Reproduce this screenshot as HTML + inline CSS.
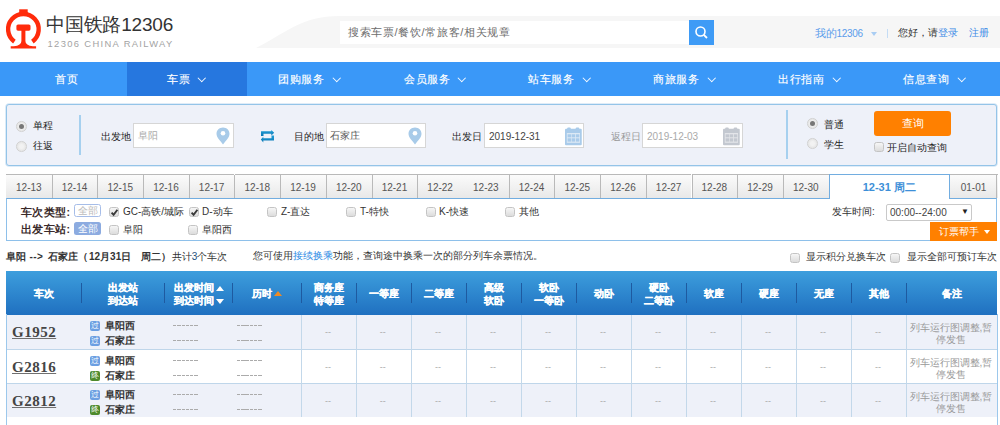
<!DOCTYPE html>
<html><head><meta charset="utf-8">
<style>
*{margin:0;padding:0;box-sizing:border-box}
html,body{width:1000px;height:425px;overflow:hidden;background:#fff}
body{font-family:"Liberation Sans",sans-serif;font-size:10px;color:#333;position:relative}
.a{position:absolute;white-space:nowrap;line-height:1}
/* header */
#logo-t{left:46px;top:15px;font-size:19px;color:#333;letter-spacing:-0.2px}
#logo-s{left:47.5px;top:38.5px;font-size:9.4px;color:#a3a3a3;letter-spacing:1.35px}
#band{left:0;top:16px;width:1000px;height:32px}
#sinput{left:340px;top:21px;width:349px;height:23px;background:#fff}
#sbtn{left:689px;top:20px;width:25px;height:25px;background:#3e9bf6}
.nav{top:62px;height:34px;background:#3a98f8;left:0;width:1000px}
.navi{top:74px;font-size:11px;color:#fff;letter-spacing:0.65px;-webkit-text-stroke:0.15px #fff}
.chev{position:absolute;top:75px;width:5.5px;height:5.5px;border-right:1.6px solid #fff;border-bottom:1.6px solid #fff;transform:rotate(45deg)}
/* panel */
#panel{left:6px;top:104px;width:991px;height:62px;background:#eef1f9;border:1px solid #94c4e8;border-radius:3px;box-shadow:0 0 0 0.8px rgba(160,200,235,0.45)}
.radio{position:absolute;width:10.5px;height:10.5px;border-radius:50%;border:1px solid #d2d2d2;background:radial-gradient(circle,#f2f2f2 30%,#dcdcdc 100%)}
.radio.on:after{content:"";position:absolute;left:1.75px;top:1.75px;width:5px;height:5px;border-radius:50%;background:#777}
.lbl{font-size:10.3px;color:#262626;margin-top:1px}
.inp{position:absolute;height:25px;background:#fff;border:1px solid #d6d6d6;top:123px}
.cb{position:absolute;width:10px;height:10px;border:1px solid #c4c4c4;border-radius:2.5px;background:linear-gradient(#f6f6f6,#dcdcdc)}
.cb.k svg{position:absolute;left:0;top:0}
.vdiv{position:absolute;width:1.5px;background:#a6d0ef}
/* tabs */
.tab{position:absolute;top:174px;height:24px;width:46px;border-top:1px solid #b9b9b9;background:linear-gradient(#fbfbfb,#e8e8e8);font-size:10px;color:#555;text-align:center;line-height:25px}
#filter{left:6px;top:198px;width:991px;height:43px;border:1px solid #72ade0;border-left-color:#8ec0ea;border-right-color:#8ec0ea;border-bottom-color:#8ec0ea;background:#fff}
/* table */
#thead{left:6px;top:271px;width:991px;height:44px;background:linear-gradient(#3d9edd,#1f70c0)}
.th{position:absolute;color:#fff;font-weight:bold;-webkit-text-stroke:0.25px #fff;font-size:10px;text-align:center;line-height:13px;white-space:nowrap}
.hsep{position:absolute;top:283px;width:1px;height:20px;background:#1e5aa0}
.row{position:absolute;left:6px;width:991px;height:34px}
.tr{font-family:"Liberation Serif",serif;font-weight:bold;font-size:15px;color:#454545;text-decoration:underline;text-decoration-color:#707070;text-decoration-thickness:1.3px;text-underline-offset:0.5px;letter-spacing:0.5px}
.st{font-size:10px;font-weight:bold;color:#333}
.ic{position:absolute;width:10px;height:10px;border-radius:2px;background:#6c9fe2;color:#fff;font-size:8px;line-height:10px;text-align:center}
.ic.g{background:#4d8a2c}
.dash{position:absolute;width:25.5px;height:1px;background:repeating-linear-gradient(90deg,#ababab 0,#ababab 3.4px,rgba(0,0,0,0) 3.4px,rgba(0,0,0,0) 4.25px)}
.cell{position:absolute;width:1px;background:#c3d8ea}
.dd{position:absolute;font-size:9px;color:#aaa}
.rm{position:absolute;font-size:10px;color:#999;text-align:center;line-height:12px;width:90px;white-space:normal}
.up,.dn,.upo{display:inline-block;width:0;height:0;border-left:4px solid transparent;border-right:4px solid transparent;margin-left:2px;vertical-align:middle}
.up{border-bottom:5px solid #fff}.dn{border-top:5px solid #fff}.upo{border-bottom:5px solid #f08a24}
.inf{top:252px;font-size:10px;color:#333}.inf.b{font-weight:bold}
</style></head><body>

<!-- logo -->
<svg class="a" style="left:0;top:0" width="50" height="53" viewBox="0 0 50 53">
  <path d="M14.4 41.6 A15.3 15.3 0 1 1 32.4 41.6" fill="none" stroke="#ff2b0b" stroke-width="4.4"/>
  <rect x="19.2" y="9.3" width="8.5" height="4" fill="#ff2b0b"/>
  <rect x="16.4" y="24.4" width="14.1" height="6.3" rx="1.6" fill="#ff2b0b"/>
  <path d="M21.4 30 H25.4 V41 Q25.4 45.6 33 46.2 H36.1 V48.6 H10.7 V46.2 H13.8 Q21.4 45.6 21.4 41 Z" fill="#ff2b0b"/>
</svg>
<div class="a" id="logo-t">中国铁路12306</div>
<div class="a" id="logo-s">12306 CHINA RAILWAY</div>

<svg class="a" style="left:0;top:16px" width="1000" height="32"><path d="M256 32 C 285 18, 300 0, 340 0 L1000 0 L1000 32 Z" fill="#f6f6f6"/></svg>
<div class="a" id="sinput"></div>
<div class="a" style="left:348px;top:27px;font-size:11px;color:#6d6d6d;letter-spacing:0.65px">搜索车票/餐饮/常旅客/相关规章</div>
<div class="a" id="sbtn"><svg width="25" height="25"><circle cx="11.5" cy="11.5" r="4.5" fill="none" stroke="#fff" stroke-width="1.6"/><path d="M14.8 14.8 L18 18" stroke="#fff" stroke-width="1.8"/></svg></div>
<div class="a" style="left:815px;top:27.5px;font-size:10.5px;color:#5a9ceb;letter-spacing:-0.3px">我的<span style="font-size:10px">12306</span></div>
<div class="a" style="left:871px;top:32px;width:0;height:0;border-left:3.5px solid transparent;border-right:3.5px solid transparent;border-top:4px solid #a9cdf3"></div>
<div class="a" style="left:887px;top:29px;width:1px;height:9px;background:#c4dcf5"></div>
<div class="a" style="left:898px;top:27.5px;font-size:10px;color:#333">您好，请<span style="color:#3b8ae6">登录</span></div>
<div class="a" style="left:968.5px;top:27.5px;font-size:10px;color:#3b8ae6">注册</div>

<!-- nav -->
<div class="a nav"></div>
<div class="a" style="left:127px;top:62px;width:120px;height:34px;background:#2677df"></div>
<div class="a navi" style="left:55px">首页</div>
<div class="a navi" style="left:167px">车票</div><div class="chev" style="left:199px"></div>
<div class="a navi" style="left:278px">团购服务</div><div class="chev" style="left:334px"></div>
<div class="a navi" style="left:404px">会员服务</div><div class="chev" style="left:459px"></div>
<div class="a navi" style="left:528px">站车服务</div><div class="chev" style="left:584px"></div>
<div class="a navi" style="left:653px">商旅服务</div><div class="chev" style="left:709px"></div>
<div class="a navi" style="left:778px">出行指南</div><div class="chev" style="left:834px"></div>
<div class="a navi" style="left:903px">信息查询</div><div class="chev" style="left:959px"></div>

<!-- panel -->
<div class="a" id="panel"></div>
<div class="radio on" style="left:16px;top:121px"></div>
<div class="a lbl" style="left:33px;top:120px">单程</div>
<div class="radio" style="left:16px;top:141px"></div>
<div class="a lbl" style="left:33px;top:140px">往返</div>
<div class="vdiv" style="left:79px;top:115px;height:40px"></div>

<div class="a lbl" style="left:101px;top:131px">出发地</div>
<div class="inp" style="left:133px;width:101px"></div>
<div class="a" style="left:138px;top:131px;font-size:10px;color:#aaa">阜阳</div>
<svg class="a" style="left:216px;top:127px" width="14" height="18" viewBox="0 0 14 18"><path d="M7 0.5 C3.2 0.5 0.5 3.3 0.5 6.8 C0.5 10.5 4 13.5 7 17.5 C10 13.5 13.5 10.5 13.5 6.8 C13.5 3.3 10.8 0.5 7 0.5Z" fill="#a8cbe9"/><circle cx="7" cy="6.3" r="2.3" fill="#fff"/></svg>

<svg class="a" style="left:255px;top:125px" width="25" height="22" viewBox="0 0 25 22"><defs><linearGradient id="sg" x1="0" y1="0" x2="0" y2="1"><stop offset="0" stop-color="#22a0d8"/><stop offset="1" stop-color="#0a76b4"/></linearGradient></defs><path d="M6 6.2 H16.3 V5 L19.2 7.8 L16.3 10.6 V8.8 H8.5 V11.1 H6 Z" fill="url(#sg)"/><path d="M19 15.5 H8.3 V17.4 L5.8 14.5 L8.3 11.7 V13.2 H16.5 V10.4 H19 Z" fill="url(#sg)"/></svg>

<div class="a lbl" style="left:294px;top:131px">目的地</div>
<div class="inp" style="left:326px;width:100px"></div>
<div class="a" style="left:330px;top:131px;font-size:10px;color:#555">石家庄</div>
<svg class="a" style="left:408px;top:127px" width="14" height="18" viewBox="0 0 14 18"><path d="M7 0.5 C3.2 0.5 0.5 3.3 0.5 6.8 C0.5 10.5 4 13.5 7 17.5 C10 13.5 13.5 10.5 13.5 6.8 C13.5 3.3 10.8 0.5 7 0.5Z" fill="#a8cbe9"/><circle cx="7" cy="6.3" r="2.3" fill="#fff"/></svg>

<div class="a lbl" style="left:452px;top:131px">出发日</div>
<div class="inp" style="left:484px;width:100px"></div>
<div class="a" style="left:489px;top:132px;font-size:10px;color:#444">2019-12-31</div>
<svg class="a" style="left:565px;top:127px" width="18" height="19" viewBox="0 0 18 19"><rect x="0" y="1.8" width="16.75" height="16.4" rx="1" fill="#a9cbea"/><rect x="2.3" y="0.4" width="3.4" height="3" rx="0.8" fill="#a9cbea"/><rect x="10.8" y="0.4" width="3.4" height="3" rx="0.8" fill="#a9cbea"/><rect x="1.8" y="6" width="13.2" height="9.8" fill="#dce9f5"/><g fill="#a9cbea"><rect x="2.6" y="7.3" width="3.7" height="3"/><rect x="6.9" y="7.3" width="3.2" height="3"/><rect x="10.9" y="7.3" width="3.4" height="3"/><rect x="2.6" y="11.3" width="3.7" height="3.3"/><rect x="6.9" y="11.3" width="3.2" height="3.3"/><rect x="10.9" y="11.3" width="3.4" height="3.3"/></g></svg>

<div class="a lbl" style="left:611px;top:131px;color:#999">返程日</div>
<div class="inp" style="left:642px;width:101px"></div>
<div class="a" style="left:647px;top:132px;font-size:10px;color:#aaa">2019-12-03</div>
<svg class="a" style="left:723px;top:127px" width="18" height="19" viewBox="0 0 18 19"><rect x="0" y="1.8" width="16.75" height="16.4" rx="1" fill="#c3c8d0"/><rect x="2.3" y="0.4" width="3.4" height="3" rx="0.8" fill="#c3c8d0"/><rect x="10.8" y="0.4" width="3.4" height="3" rx="0.8" fill="#c3c8d0"/><rect x="1.8" y="6" width="13.2" height="9.8" fill="#e3e5e9"/><g fill="#c3c8d0"><rect x="2.6" y="7.3" width="3.7" height="3"/><rect x="6.9" y="7.3" width="3.2" height="3"/><rect x="10.9" y="7.3" width="3.4" height="3"/><rect x="2.6" y="11.3" width="3.7" height="3.3"/><rect x="6.9" y="11.3" width="3.2" height="3.3"/><rect x="10.9" y="11.3" width="3.4" height="3.3"/></g></svg>

<div class="vdiv" style="left:786px;top:110px;height:49px"></div>
<div class="radio on" style="left:807px;top:118px"></div>
<div class="a lbl" style="left:824px;top:119px">普通</div>
<div class="radio" style="left:807px;top:138px"></div>
<div class="a lbl" style="left:824px;top:139px">学生</div>
<div class="a" style="left:874px;top:111px;width:77px;height:25px;background:#ff8000;border-radius:3px;color:#fff;font-size:11px;text-align:center;line-height:25px">查询</div>
<div class="cb" style="left:874px;top:142px"></div>
<div class="a lbl" style="left:887px;top:142px">开启自动查询</div>

<!-- date tabs -->
<div class="a" style="left:6px;top:174px;width:1px;height:24px;background:#b9b9b9"></div>
<div class="tab" style="left:6.0px;width:45.7px">12-13</div>
<div class="tab" style="left:51.7px;width:45.7px">12-14</div>
<div class="tab" style="left:97.4px;width:45.7px">12-15</div>
<div class="tab" style="left:143.1px;width:45.7px">12-16</div>
<div class="tab" style="left:188.8px;width:45.7px">12-17</div>
<div class="tab" style="left:234.5px;width:45.7px">12-18</div>
<div class="tab" style="left:280.2px;width:45.7px">12-19</div>
<div class="tab" style="left:325.9px;width:45.7px">12-20</div>
<div class="tab" style="left:371.6px;width:45.7px">12-21</div>
<div class="tab" style="left:417.3px;width:45.7px">12-22</div>
<div class="tab" style="left:463.0px;width:45.7px">12-23</div>
<div class="tab" style="left:508.7px;width:45.7px">12-24</div>
<div class="tab" style="left:554.4px;width:45.7px">12-25</div>
<div class="tab" style="left:600.1px;width:45.7px">12-26</div>
<div class="tab" style="left:645.8px;width:45.7px">12-27</div>
<div class="tab" style="left:691.5px;width:45.7px">12-28</div>
<div class="tab" style="left:737.2px;width:45.7px">12-29</div>
<div class="tab" style="left:782.9px;width:45.7px">12-30</div>
<div class="tab" style="left:949.5px;width:48px">01-01</div>
<div class="a" style="left:52px;top:175px;width:1px;height:23px;background:#b9b9b9"></div>
<div class="a" style="left:97px;top:175px;width:1px;height:23px;background:#b9b9b9"></div>
<div class="a" style="left:143px;top:175px;width:1px;height:23px;background:#b9b9b9"></div>
<div class="a" style="left:189px;top:175px;width:1px;height:23px;background:#b9b9b9"></div>
<div class="a" style="left:234px;top:175px;width:1px;height:23px;background:#b9b9b9"></div>
<div class="a" style="left:280px;top:175px;width:1px;height:23px;background:#b9b9b9"></div>
<div class="a" style="left:326px;top:175px;width:1px;height:23px;background:#b9b9b9"></div>
<div class="a" style="left:372px;top:175px;width:1px;height:23px;background:#b9b9b9"></div>
<div class="a" style="left:417px;top:175px;width:1px;height:23px;background:#b9b9b9"></div>
<div class="a" style="left:509px;top:175px;width:1px;height:23px;background:#b9b9b9"></div>
<div class="a" style="left:554px;top:175px;width:1px;height:23px;background:#b9b9b9"></div>
<div class="a" style="left:600px;top:175px;width:1px;height:23px;background:#b9b9b9"></div>
<div class="a" style="left:646px;top:175px;width:1px;height:23px;background:#b9b9b9"></div>
<div class="a" style="left:692px;top:175px;width:1px;height:23px;background:#b9b9b9"></div>
<div class="a" style="left:737px;top:175px;width:1px;height:23px;background:#b9b9b9"></div>
<div class="a" style="left:783px;top:175px;width:1px;height:23px;background:#b9b9b9"></div>
<div class="a" style="left:996px;top:175px;width:1px;height:23px;background:#b9b9b9"></div>

<div class="a" id="filter"></div>
<div class="a" style="left:828.5px;top:174px;width:121.5px;height:25px;background:#fff;border:1px solid #72ade0;border-bottom:none;text-align:center;line-height:24px;font-size:11px;font-weight:bold;color:#3d8fd8">12-31 周二</div>

<div class="a" style="left:21px;top:206.5px;font-size:10.5px;font-weight:bold;color:#3a2a2a;letter-spacing:0.4px">车次类型:</div>
<div class="a" style="left:74px;top:204px;width:27px;height:13px;border:1px solid #a6bde8;border-radius:2.5px;font-size:9.5px;color:#bbb;text-align:center;line-height:11px">全部</div>
<div class="cb k" style="left:109px;top:206.5px"><svg width="9" height="9" viewBox="0 0 9 9"><path d="M1.6 4.6 L3.6 6.8 L7.4 1.8" fill="none" stroke="#3a3a3a" stroke-width="1.9"/></svg></div>
<div class="a" style="left:123px;top:207px;font-size:10px;color:#333">GC-高铁/城际</div>
<div class="cb k" style="left:188.5px;top:206.5px"><svg width="9" height="9" viewBox="0 0 9 9"><path d="M1.6 4.6 L3.6 6.8 L7.4 1.8" fill="none" stroke="#3a3a3a" stroke-width="1.9"/></svg></div>
<div class="a" style="left:202px;top:207px;font-size:10px;color:#333">D-动车</div>
<div class="cb" style="left:266.5px;top:207px"></div>
<div class="a" style="left:281px;top:207px;font-size:10px;color:#333">Z-直达</div>
<div class="cb" style="left:345.5px;top:207px"></div>
<div class="a" style="left:360px;top:207px;font-size:10px;color:#333">T-特快</div>
<div class="cb" style="left:425.5px;top:207px"></div>
<div class="a" style="left:439px;top:207px;font-size:10px;color:#333">K-快速</div>
<div class="cb" style="left:504.5px;top:207px"></div>
<div class="a" style="left:519px;top:207px;font-size:10px;color:#333">其他</div>

<div class="a" style="left:21px;top:224px;font-size:10.5px;font-weight:bold;color:#3a2a2a;letter-spacing:0.4px">出发车站:</div>
<div class="a" style="left:74px;top:222px;width:27px;height:13px;background:#8cabe0;border-radius:2.5px;font-size:9.5px;color:#fff;text-align:center;line-height:13px">全部</div>
<div class="cb" style="left:109.0px;top:225px"></div>
<div class="a" style="left:123px;top:225px;font-size:10px;color:#333">阜阳</div>
<div class="cb" style="left:188.0px;top:225px"></div>
<div class="a" style="left:202px;top:225px;font-size:10px;color:#333">阜阳西</div>

<div class="a" style="left:832px;top:207px;font-size:10px;color:#333">发车时间:</div>
<div class="a" style="left:886px;top:204px;width:86px;height:17px;border:1px solid #c9c9c9;border-radius:2px;background:#fff"></div>
<div class="a" style="left:890px;top:208px;font-size:10px;color:#444">00:00--24:00</div>
<div class="a" style="left:961px;top:208px;font-size:8px;color:#222">▼</div>
<div class="a" style="left:930px;top:222px;width:67px;height:19px;background:#ff8000;color:#fff;font-size:10px;line-height:19px;padding-left:9px">订票帮手</div>
<div class="a" style="left:984px;top:230px;width:0;height:0;border-left:3.5px solid transparent;border-right:3.5px solid transparent;border-top:4px solid #fff"></div>

<!-- info line -->
<div class="a inf b" style="left:5.5px">阜阳</div><div class="a inf b" style="left:29.4px;letter-spacing:0.5px">--&gt;</div><div class="a inf b" style="left:48px">石家庄</div><div class="a inf b" style="left:78px">（</div><div class="a inf b" style="left:89px">12月31日</div><div class="a inf b" style="left:140.6px">周二</div><div class="a inf b" style="left:161px">）</div><div class="a inf" style="left:171.8px">共计<span style="color:#24507e">3</span>个车次</div>
<div class="a" style="left:253px;top:251px;font-size:10px;color:#333">您可使用<span style="color:#2b8ae4">接续换乘</span>功能，查询途中换乘一次的部分列车余票情况。</div>
<div class="cb" style="left:789.5px;top:252.5px"></div>
<div class="a" style="left:806px;top:252px;font-size:10px;color:#333">显示积分兑换车次</div>
<div class="cb" style="left:890px;top:252.5px"></div>
<div class="a" style="left:907px;top:252px;font-size:10px;color:#333">显示全部可预订车次</div>

<!-- table -->
<div class="a" id="thead"></div>
<div class="hsep" style="left:81.0px"></div>
<div class="hsep" style="left:164.4px"></div>
<div class="hsep" style="left:232.4px"></div>
<div class="hsep" style="left:301.4px"></div>
<div class="hsep" style="left:356.0px"></div>
<div class="hsep" style="left:411.4px"></div>
<div class="hsep" style="left:466.4px"></div>
<div class="hsep" style="left:521.4px"></div>
<div class="hsep" style="left:576.4px"></div>
<div class="hsep" style="left:631.4px"></div>
<div class="hsep" style="left:686.4px"></div>
<div class="hsep" style="left:741.4px"></div>
<div class="hsep" style="left:796.4px"></div>
<div class="hsep" style="left:851.4px"></div>
<div class="hsep" style="left:906.0px"></div>
<div class="th" style="left:-6.3px;top:286.5px;width:100px">车次</div>
<div class="th" style="left:73.0px;top:281.0px;width:100px">出发站<br>到达站</div>
<div class="th" style="left:148.5px;top:281.0px;width:100px">出发时间<span class="up"></span><br>到达时间<span class="dn"></span></div>
<div class="th" style="left:217.0px;top:286.5px;width:100px">历时<span class="upo"></span></div>
<div class="th" style="left:279.0px;top:281.0px;width:100px">商务座<br>特等座</div>
<div class="th" style="left:333.7px;top:286.5px;width:100px">一等座</div>
<div class="th" style="left:389.0px;top:286.5px;width:100px">二等座</div>
<div class="th" style="left:444.0px;top:281.0px;width:100px">高级<br>软卧</div>
<div class="th" style="left:499.0px;top:281.0px;width:100px">软卧<br>一等卧</div>
<div class="th" style="left:554.0px;top:286.5px;width:100px">动卧</div>
<div class="th" style="left:609.0px;top:281.0px;width:100px">硬卧<br>二等卧</div>
<div class="th" style="left:664.0px;top:286.5px;width:100px">软座</div>
<div class="th" style="left:719.0px;top:286.5px;width:100px">硬座</div>
<div class="th" style="left:774.0px;top:286.5px;width:100px">无座</div>
<div class="th" style="left:829.0px;top:286.5px;width:100px">其他</div>
<div class="th" style="left:901.5px;top:286.5px;width:100px">备注</div>

<div class="row" style="top:315px;height:34px;background:#eef1f9"></div>
<div class="cell" style="left:301.4px;top:315px;height:34px"></div>
<div class="cell" style="left:356.0px;top:315px;height:34px"></div>
<div class="cell" style="left:411.4px;top:315px;height:34px"></div>
<div class="cell" style="left:466.4px;top:315px;height:34px"></div>
<div class="cell" style="left:521.4px;top:315px;height:34px"></div>
<div class="cell" style="left:576.4px;top:315px;height:34px"></div>
<div class="cell" style="left:631.4px;top:315px;height:34px"></div>
<div class="cell" style="left:686.4px;top:315px;height:34px"></div>
<div class="cell" style="left:741.4px;top:315px;height:34px"></div>
<div class="cell" style="left:796.4px;top:315px;height:34px"></div>
<div class="cell" style="left:851.4px;top:315px;height:34px"></div>
<div class="cell" style="left:906.0px;top:315px;height:34px"></div>
<div class="a tr" style="left:12px;top:324.5px">G1952</div>
<div class="ic" style="left:90px;top:320.5px">过</div>
<div class="a st" style="left:105px;top:320.5px">阜阳西</div>
<div class="dash" style="left:173px;top:324.5px"></div>
<div class="dash" style="left:236.5px;top:324.5px"></div>
<div class="ic" style="left:90px;top:335.5px">过</div>
<div class="a st" style="left:105px;top:335.5px">石家庄</div>
<div class="dash" style="left:173px;top:339.5px"></div>
<div class="dash" style="left:236.5px;top:339.5px"></div>
<div class="a dd" style="left:325.0px;top:328px">--</div>
<div class="a dd" style="left:379.7px;top:328px">--</div>
<div class="a dd" style="left:435.0px;top:328px">--</div>
<div class="a dd" style="left:490.0px;top:328px">--</div>
<div class="a dd" style="left:545.0px;top:328px">--</div>
<div class="a dd" style="left:600.0px;top:328px">--</div>
<div class="a dd" style="left:655.0px;top:328px">--</div>
<div class="a dd" style="left:710.0px;top:328px">--</div>
<div class="a dd" style="left:765.0px;top:328px">--</div>
<div class="a dd" style="left:820.0px;top:328px">--</div>
<div class="a dd" style="left:875.0px;top:328px">--</div>
<div class="rm" style="left:906px;top:322px">列车运行图调整,暂停发售</div>
<div class="row" style="top:349px;height:34px;background:#fff"></div>
<div class="a" style="left:6px;top:349px;width:991px;height:1px;background:#bfd6ea"></div>
<div class="cell" style="left:301.4px;top:349px;height:34px"></div>
<div class="cell" style="left:356.0px;top:349px;height:34px"></div>
<div class="cell" style="left:411.4px;top:349px;height:34px"></div>
<div class="cell" style="left:466.4px;top:349px;height:34px"></div>
<div class="cell" style="left:521.4px;top:349px;height:34px"></div>
<div class="cell" style="left:576.4px;top:349px;height:34px"></div>
<div class="cell" style="left:631.4px;top:349px;height:34px"></div>
<div class="cell" style="left:686.4px;top:349px;height:34px"></div>
<div class="cell" style="left:741.4px;top:349px;height:34px"></div>
<div class="cell" style="left:796.4px;top:349px;height:34px"></div>
<div class="cell" style="left:851.4px;top:349px;height:34px"></div>
<div class="cell" style="left:906.0px;top:349px;height:34px"></div>
<div class="a tr" style="left:12px;top:359.5px">G2816</div>
<div class="ic" style="left:90px;top:355.5px">过</div>
<div class="a st" style="left:105px;top:355.5px">阜阳西</div>
<div class="dash" style="left:173px;top:359.5px"></div>
<div class="dash" style="left:236.5px;top:359.5px"></div>
<div class="ic g" style="left:90px;top:370.5px">终</div>
<div class="a st" style="left:105px;top:370.5px">石家庄</div>
<div class="dash" style="left:173px;top:374.5px"></div>
<div class="dash" style="left:236.5px;top:374.5px"></div>
<div class="a dd" style="left:325.0px;top:363px">--</div>
<div class="a dd" style="left:379.7px;top:363px">--</div>
<div class="a dd" style="left:435.0px;top:363px">--</div>
<div class="a dd" style="left:490.0px;top:363px">--</div>
<div class="a dd" style="left:545.0px;top:363px">--</div>
<div class="a dd" style="left:600.0px;top:363px">--</div>
<div class="a dd" style="left:655.0px;top:363px">--</div>
<div class="a dd" style="left:710.0px;top:363px">--</div>
<div class="a dd" style="left:765.0px;top:363px">--</div>
<div class="a dd" style="left:820.0px;top:363px">--</div>
<div class="a dd" style="left:875.0px;top:363px">--</div>
<div class="rm" style="left:906px;top:357px">列车运行图调整,暂停发售</div>
<div class="row" style="top:383px;height:34px;background:#eef1f9"></div>
<div class="a" style="left:6px;top:383px;width:991px;height:1px;background:#bfd6ea"></div>
<div class="cell" style="left:301.4px;top:383px;height:34px"></div>
<div class="cell" style="left:356.0px;top:383px;height:34px"></div>
<div class="cell" style="left:411.4px;top:383px;height:34px"></div>
<div class="cell" style="left:466.4px;top:383px;height:34px"></div>
<div class="cell" style="left:521.4px;top:383px;height:34px"></div>
<div class="cell" style="left:576.4px;top:383px;height:34px"></div>
<div class="cell" style="left:631.4px;top:383px;height:34px"></div>
<div class="cell" style="left:686.4px;top:383px;height:34px"></div>
<div class="cell" style="left:741.4px;top:383px;height:34px"></div>
<div class="cell" style="left:796.4px;top:383px;height:34px"></div>
<div class="cell" style="left:851.4px;top:383px;height:34px"></div>
<div class="cell" style="left:906.0px;top:383px;height:34px"></div>
<div class="a tr" style="left:12px;top:393.5px">G2812</div>
<div class="ic" style="left:90px;top:389.5px">过</div>
<div class="a st" style="left:105px;top:389.5px">阜阳西</div>
<div class="dash" style="left:173px;top:393.5px"></div>
<div class="dash" style="left:236.5px;top:393.5px"></div>
<div class="ic g" style="left:90px;top:404.5px">终</div>
<div class="a st" style="left:105px;top:404.5px">石家庄</div>
<div class="dash" style="left:173px;top:408.5px"></div>
<div class="dash" style="left:236.5px;top:408.5px"></div>
<div class="a dd" style="left:325.0px;top:397px">--</div>
<div class="a dd" style="left:379.7px;top:397px">--</div>
<div class="a dd" style="left:435.0px;top:397px">--</div>
<div class="a dd" style="left:490.0px;top:397px">--</div>
<div class="a dd" style="left:545.0px;top:397px">--</div>
<div class="a dd" style="left:600.0px;top:397px">--</div>
<div class="a dd" style="left:655.0px;top:397px">--</div>
<div class="a dd" style="left:710.0px;top:397px">--</div>
<div class="a dd" style="left:765.0px;top:397px">--</div>
<div class="a dd" style="left:820.0px;top:397px">--</div>
<div class="a dd" style="left:875.0px;top:397px">--</div>
<div class="rm" style="left:906px;top:391px">列车运行图调整,暂停发售</div>

<div class="a" style="left:6px;top:314px;width:1px;height:111px;background:#9cc8ec"></div>
<div class="a" style="left:997px;top:314px;width:1px;height:111px;background:#9cc8ec"></div>


</body></html>
